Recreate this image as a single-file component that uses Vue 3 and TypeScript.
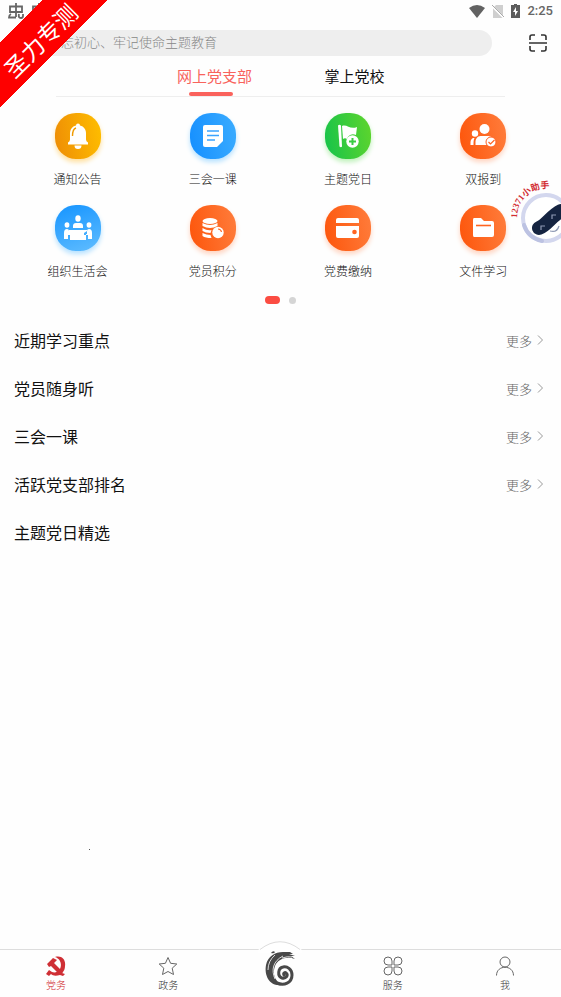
<script setup lang="ts">
import { ref } from 'vue'

interface Entry {
  label: string
  icon: string
  tone: string
}

const keyword = ref('不忘初心、牢记使命主题教育')
const tabs: string[] = ['网上党支部', '掌上党校']
const activeTab = ref(0)

const entries: Entry[] = [
  { label: '通知公告', icon: 'bell', tone: 'amber' },
  { label: '三会一课', icon: 'note', tone: 'blue' },
  { label: '主题党日', icon: 'flag', tone: 'green' },
  { label: '双报到', icon: 'people', tone: 'orange' },
  { label: '组织生活会', icon: 'meeting', tone: 'sky' },
  { label: '党员积分', icon: 'coins', tone: 'orange' },
  { label: '党费缴纳', icon: 'card', tone: 'orange' },
  { label: '文件学习', icon: 'folder', tone: 'orange' },
]

const sections = [
  { title: '近期学习重点', more: true },
  { title: '党员随身听', more: true },
  { title: '三会一课', more: true },
  { title: '活跃党支部排名', more: true },
  { title: '主题党日精选', more: false },
]
</script>

<template>
  <div class="page">
    <div class="status">
      <div class="notices">
        <svg v-for="n in 2" :key="n" width="16" height="18" viewBox="0 0 16 18" fill="none" stroke="#666" stroke-width="1.800">
          <path d="M2 4.500h12v5.500H2ZM8 1v14M3 12q-2 1-2 3.500h7M11 12q-1 4 2 4 2 0 2-2v-2" />
        </svg>
      </div>
      <div class="signals">
        <svg width="16" height="13" viewBox="0 0 16 13"><path d="M0 3Q8-3 16 3L8 13Z" fill="#626262" /></svg>
        <svg width="12" height="13" viewBox="0 0 12 13">
          <path d="M4 0h7v13H1V3Z" fill="#cfcfcf" /><path d="M0 1l12 12" stroke="#fff" stroke-width="2" /><path d="M0 0l12 12" stroke="#aaa" />
        </svg>
        <svg width="9" height="14" viewBox="0 0 9 14"><path d="M3 0h3v1h3v13H0V1h3Z" fill="#5c5c5c" /><path d="M5 3L2 8h2v4l3-5H5Z" fill="#fff" /></svg>
        <span class="clock">2:25</span>
      </div>
    </div>

    <header class="search-row">
      <input v-model="keyword" class="search" type="text" aria-label="搜索" />
      <button class="scan" type="button" aria-label="扫一扫">
        <svg width="18" height="18" viewBox="0 0 18 18" fill="none" stroke="#333" stroke-width="1.6">
          <path d="M1 6V3q0-2 2-2h3M12 1h3q2 0 2 2v3M17 12v3q0 2-2 2h-3M6 17H3q-2 0-2-2v-3M0 9h18" />
        </svg>
      </button>
    </header>

    <nav class="tabs">
      <button
        v-for="(tab, i) in tabs"
        :key="tab"
        type="button"
        class="tab"
        :class="{ active: i === activeTab }"
        @click="activeTab = i"
      >{{ tab }}</button>
    </nav>

    <section class="grid">
      <a v-for="e in entries" :key="e.label" href="#" class="entry">
        <span class="tile" :class="e.tone">
          <svg width="46" height="46" viewBox="0 0 46 46" fill="#fff">
            <template v-if="e.icon === 'bell'">
              <path d="M23 10.500a2 2 0 0 1 2 2c4 1 6 4 6 8v6q0 2 2 3v2H13v-2q2-1 2-3v-6c0-4 2-7 6-8a2 2 0 0 1 2-2ZM19.500 32.500h7a3.500 3.500 0 0 1-7 0Z" />
              <path d="M17.500 23c0-4 .5-7 3.500-8" fill="none" stroke="#f09a00" stroke-width="1.4" />
            </template>
            <template v-else-if="e.icon === 'note'">
              <path d="M15 12h16q2 0 2 2v14l-6 6H15q-2 0-2-2V14q0-2 2-2Z" />
              <path d="M17 18h12M17 22.500h12M17 27h8" stroke="#3ba4ff" stroke-width="1.400" />
            </template>
            <template v-else-if="e.icon === 'flag'">
              <path d="M13 12.500q1.500-1.500 3 0l1 21q-1 1.500-2.500 0Z" />
              <path d="M17 13c5-2 8 4 15 1l-1 8c-5-2-8 1-9 4-1-1-3-1-4 0Z" />
              <circle cx="27.500" cy="28.500" r="6.200" />
              <path d="M27.500 25v7M24 28.500h7" stroke="#38cc42" stroke-width="2" />
            </template>
            <template v-else-if="e.icon === 'people'">
              <circle cx="24.500" cy="16" r="5" /><circle cx="15" cy="20.500" r="3.200" />
              <path d="M15.500 32v-3c0-3 2-6 5-6h8c3 0 5 3 5 6v3ZM10.500 32v-2c0-3 1-5 4-5-1 2-1 4-1 7Z" />
              <circle cx="31" cy="29" r="5" stroke="#ff6222" stroke-width="1" />
              <path d="M28.500 29l2 2 4-4" fill="none" stroke="#ff6222" stroke-width="1.200" />
            </template>
            <template v-else-if="e.icon === 'meeting'">
              <ellipse cx="23" cy="13.500" rx="2.700" ry="3.200" /><ellipse cx="12" cy="20" rx="2.400" ry="2.800" /><ellipse cx="34" cy="20" rx="2.400" ry="2.800" />
              <path d="M18 23v-2q0-3 3-3h4q3 0 3 3v2ZM14 25h18v4h-1v6H15v-6h-1ZM9 28q0-4 3-4 2 0 2 2l3 2v2h-4v4H9ZM37 28q0-4-3-4-2 0-2 2l-3 2v2h4v4h4Z" />
            </template>
            <template v-else-if="e.icon === 'coins'">
              <ellipse cx="20" cy="16" rx="7.500" ry="3" />
              <path d="M12.500 18q7.500 4 15 0v3q-7.500 4-15 0ZM12.500 23q5 3 9 2l-1 3q-5 0-8-2ZM12.500 28q4 2 8 2l1 3q-6 0-9-2Z" />
              <circle cx="28" cy="27.500" r="5.700" />
              <path d="M28 24q3 0 3.500 3" fill="none" stroke="#ff6a25" stroke-width="1.200" />
            </template>
            <template v-else-if="e.icon === 'card'">
              <path d="M13 13h19q2 0 2 2v3H11v-3q0-2 2-2ZM11 21h23v10q0 2-2 2H13q-2 0-2-2Z" />
              <circle cx="29.500" cy="27" r="2.300" fill="#ff6420" />
            </template>
            <template v-else>
              <path d="M14 13h7l3 3h8q2 0 2 2v12q0 2-2 2H14q-1 0-1-2V15q0-2 1-2Z" />
              <path d="M16 20.500h15" stroke="#ff6420" stroke-width="1.600" />
            </template>
          </svg>
        </span>
        <span>{{ e.label }}</span>
      </a>
    </section>

    <div class="pager"><i class="pill"></i><i class="dot"></i></div>

    <main class="sections">
      <div v-for="s in sections" :key="s.title" class="section">
        <h2>{{ s.title }}</h2>
        <a v-if="s.more" href="#" class="more">更多
          <svg width="6" height="10" viewBox="0 0 6 10" fill="none" stroke="#999"><path d="M1 .5L5.500 5 1 9.500" /></svg>
        </a>
      </div>
    </main>

    <footer class="bar">
      <a href="#" class="item current">
        <svg width="20" height="20" viewBox="0 0 20 20" fill="#cf2f35">
          <path d="M9 1c7-2 11 3 10 9 0 3-1 5-3 7l3 1-2 2-3-1c-4 1-7 1-9-1l-2 2-3-2 3-4 3 2c3 1 6 0 8-3 2-4 1-10-5-12Z" />
          <path d="M1 8l6-6 4 2-3 3 9 9-3 3-9-9-2 1Z" />
        </svg>
        <span>党务</span>
      </a>
      <a href="#" class="item">
        <svg width="20" height="20" viewBox="0 0 20 20" fill="none" stroke="#666">
          <path d="M10 1.500l2.600 5.800 6.200.7-4.600 4.200 1.300 6.300L10 15.500l-5.500 3 1.300-6.300L1.200 8l6.200-.7Z" />
        </svg>
        <span>政务</span>
      </a>
      <a href="#" class="item home" aria-label="首页">
        <svg width="44" height="50" viewBox="0 0 44 50">
          <path d="M0 9Q22-8 44 9V12H0Z" fill="#fff" /><path d="M2 8.500Q22-7 42 8.500" fill="none" stroke="#ddd" />
          <path d="M37 18c-9-3-17 0-20 7-3 8 0 15 7 19C12 46 6 35 8 24c2-9 9-13 17-13l7 0 3 2-4 0 6 2-4 0Z" fill="#484848" />
          <path d="M13 12q2-3 4-1-1 2-4 1Z" fill="#484848" />
          <path d="M17 38C13 29 15 20 25 15M10 29q0-9 7-15M24 17q6-2 10-1" fill="none" stroke="#fff" stroke-width=".8" />
          <path d="M19 42C26 45 34 42 34 34 34 28 29 25 25 26 20 27 19 35 24 37 28 38 31 34 28 32 27 31 25 32 26 34" fill="none" stroke="#484848" stroke-width="3" stroke-linecap="round" />
        </svg>
      </a>
      <a href="#" class="item">
        <svg width="20" height="20" viewBox="0 0 20 20" fill="none" stroke="#666">
          <path d="M9 9H5a4 4 0 1 1 4-4ZM11 9V5a4 4 0 1 1 4 4ZM9 11v4a4 4 0 1 1-4-4ZM11 11h4a4 4 0 1 1-4 4Z" />
        </svg>
        <span>服务</span>
      </a>
      <a href="#" class="item">
        <svg width="20" height="20" viewBox="0 0 20 20" fill="none" stroke="#666">
          <circle cx="10" cy="6" r="5" /><path d="M1.500 19.500c0-11 17-11 17 0" />
        </svg>
        <span>我</span>
      </a>
    </footer>

    <div class="ribbon"><span>圣力专测</span></div>

    <button class="helper" type="button" aria-label="12371小助手">
      <svg width="54" height="70" viewBox="0 0 54 70">
        <defs><path id="helper-arc" d="M10 38A29 29 0 0 1 53 12" /></defs>
        <text class="helper-text"><textPath href="#helper-arc">12371小助手</textPath></text>
        <circle cx="39" cy="38" r="23" fill="#fff" stroke="#d3d7ee" stroke-width="4" />
        <path d="M17 45Q21 58 35 61" fill="none" stroke="#bcc2e2" stroke-width="4" stroke-linecap="round" />
        <path d="M32 48C40 45 44 36 54 31" fill="none" stroke="#152441" stroke-width="14" stroke-linecap="round" />
        <path d="M34 50v-4h4M45 39v-4h4M43 51q7 2 9-5" fill="none" stroke="#8f9ab5" stroke-width="1.200" />
      </svg>
    </button>
    <i class="speck"></i>
  </div>
</template>

<style>
body {
  margin: 0;
  background: #fefefe;
}
</style>

<style scoped>
.page {
  position: relative;
  display: flex;
  flex-direction: column;
  min-height: 100vh;
  overflow: hidden;
  color: #111;
  font-family: "Noto Sans CJK SC", sans-serif;
  font-weight: 300;
}
a {
  color: inherit;
  text-decoration: none;
}
button {
  padding: 0;
  border: 0;
  background: none;
  font: inherit;
  color: inherit;
}
svg {
  display: block;
}
.status {
  display: flex;
  justify-content: space-between;
  align-items: center;
  height: 22px;
  padding: 0 8px;
}
.notices,
.signals {
  display: flex;
  align-items: center;
  gap: 7px;
}
.clock {
  font: 500 13px/22px Roboto, sans-serif;
  color: #666;
}
.search-row {
  display: flex;
  align-items: center;
  padding: 8px 14px 0;
}
.search {
  flex: 1;
  box-sizing: border-box;
  min-width: 0;
  height: 26px;
  padding: 0 34px 3px;
  border: 0;
  border-radius: 13px;
  background: #eee;
  color: #888;
  font: inherit;
  font-size: 13px;
  outline: 0;
}
.scan {
  margin-left: 37px;
}
.tabs {
  display: flex;
  justify-content: center;
  margin: 0 56px;
  border-bottom: 1px solid #eee;
}
.tab {
  position: relative;
  width: 140px;
  height: 40px;
  padding-left: 8px;
  font-size: 15px;
  font-weight: 400;
  line-height: 40px;
}
.tab.active {
  color: #f8635c;
}
.tab.active::after {
  content: "";
  position: absolute;
  left: 48px;
  bottom: 0;
  width: 44px;
  height: 4px;
  border-radius: 2px;
  background: #fa625c;
}
.grid {
  display: grid;
  grid-template-columns: repeat(4, 1fr);
  row-gap: 16px;
  padding: 16px 10px 0;
}
.entry {
  display: flex;
  flex-direction: column;
  align-items: center;
  gap: 10px;
  color: #111;
  font-size: 12px;
  line-height: 20px;
}
.tile {
  border-radius: 21px;
}
.amber {
  background: linear-gradient(80deg, #ee8c05, #ffbf00);
  box-shadow: 0 3px 5px #ffdf9c;
}
.blue {
  background: linear-gradient(80deg, #158fff, #3aacff);
  box-shadow: 0 3px 5px #b5e1ff;
}
.sky {
  background: linear-gradient(160deg, #1594ff, #60bdff);
  box-shadow: 0 3px 5px #b5e1ff;
}
.green {
  background: linear-gradient(80deg, #15c34b, #60d52c);
  box-shadow: 0 3px 5px #bdf1b8;
}
.orange {
  background: linear-gradient(80deg, #fd550b, #ff7d3c);
  box-shadow: 0 3px 5px #ffd3bf;
}
.pager {
  display: flex;
  justify-content: center;
  align-items: center;
  gap: 9px;
  height: 8px;
  margin-top: 15px;
}
.pill {
  width: 15px;
  height: 8px;
  border-radius: 4px;
  background: #fb4c42;
}
.dot {
  width: 7px;
  height: 7px;
  border-radius: 50%;
  background: #d5d5d5;
}
.sections {
  padding: 12px 18px 0 14px;
}
.section {
  display: flex;
  justify-content: space-between;
  align-items: center;
  height: 48px;
}
h2 {
  margin: 0;
  font-size: 16px;
  font-weight: 400;
}
.more {
  display: flex;
  align-items: center;
  gap: 5px;
  color: #666;
  font-size: 13px;
}
.bar {
  display: grid;
  grid-template-columns: repeat(5, 1fr);
  height: 47px;
  margin-top: auto;
  border-top: 1px solid #ddd;
}
.item {
  position: relative;
  display: flex;
  flex-direction: column;
  align-items: center;
  gap: 2px;
  padding-top: 6px;
  color: #333;
  font-size: 10px;
  line-height: 14px;
}
.current {
  color: #d0272d;
}
.home svg {
  position: absolute;
  top: -9px;
}
.ribbon {
  position: absolute;
  top: 0;
  left: 0;
  width: 108px;
  height: 108px;
  background: linear-gradient(135deg, transparent 19.5%, #fe0000 19.5%, #fe0000 50%, transparent 50%);
  color: #fff;
}
.ribbon span {
  position: absolute;
  top: 26px;
  left: -8px;
  width: 100px;
  font: 23px/32px "Liberation Serif", "Noto Sans CJK SC", serif;
  text-align: center;
  transform: rotate(-45deg);
}
.helper {
  position: absolute;
  top: 180px;
  right: 0;
}
.helper-text {
  font: bold 9px "Liberation Serif", "Noto Sans CJK SC", serif;
  fill: #d22c32;
}
.speck {
  position: absolute;
  top: 849px;
  left: 89px;
  width: 1px;
  height: 1px;
  background: #555;
}
</style>
